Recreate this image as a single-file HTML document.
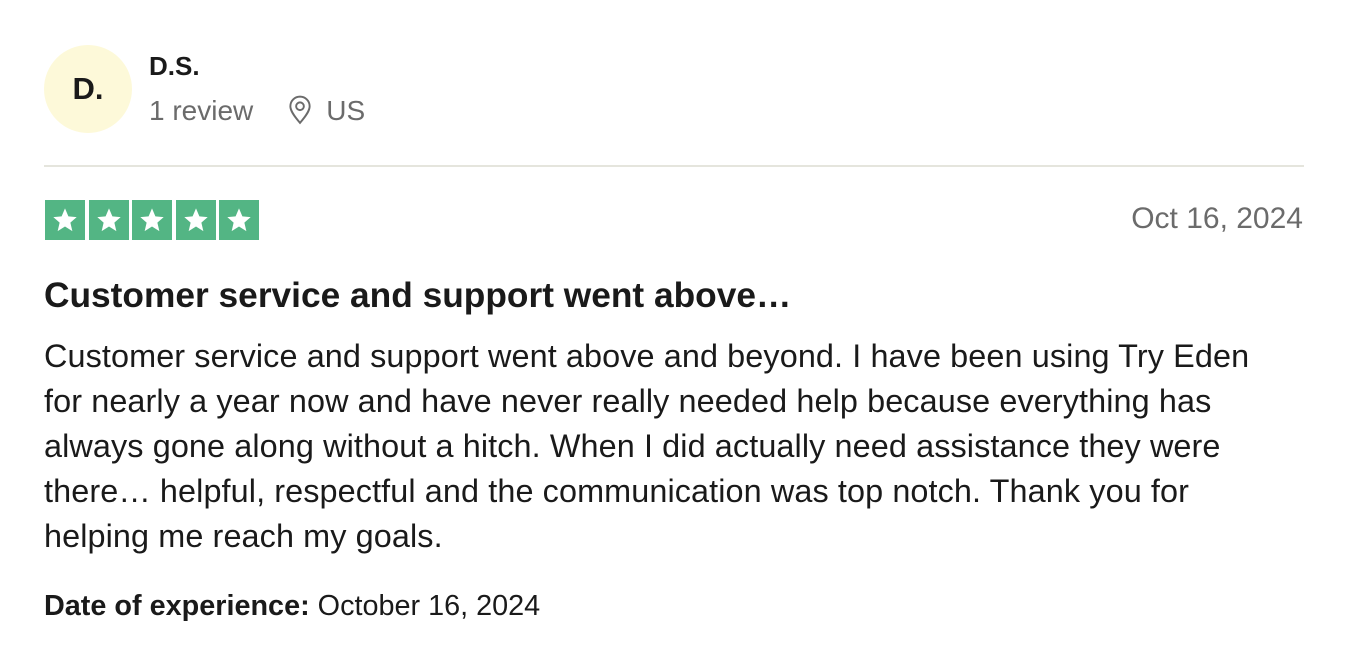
<!DOCTYPE html>
<html><head><meta charset="utf-8"><style>
body{margin:0;width:1348px;height:656px;background:#fff;font-family:"Liberation Sans",Arial,sans-serif;color:#1a1a1a;position:relative;overflow:hidden}
div{line-height:1.15}
.av{position:absolute;left:44px;top:45px;width:88px;height:88px;border-radius:50%;background:#fdf9d9;font-weight:bold;font-size:31px;line-height:88px;text-align:center}
.name{position:absolute;left:149px;top:52px;font-weight:bold;font-size:26px}
.meta{position:absolute;left:149px;top:95px;font-size:28px;color:#6b6b6b;white-space:nowrap}
.hr{position:absolute;left:44px;top:165px;width:1260px;height:2px;background:#e5e5dd}
.stars{position:absolute;left:45px;top:200px;display:flex;gap:3.5px}
.stars div{width:40px;height:40px;background:#53b584;display:flex;align-items:center;justify-content:center}
.date{position:absolute;right:45px;top:202px;font-size:30px;color:#6b6b6b}
.title{position:absolute;left:44px;top:276px;font-weight:bold;font-size:35.3px;white-space:nowrap}
.body{position:absolute;left:44px;top:334px;width:1290px;font-size:32.4px;letter-spacing:0.1px;line-height:45px;white-space:nowrap}
.doe{position:absolute;left:44px;top:590px;font-size:28.8px;white-space:nowrap}
</style></head><body>
<div class="av">D.</div>
<div class="name">D.S.</div>
<div class="meta">1 review<span style="display:inline-block;width:34px"></span><svg width="26" height="30" viewBox="0 0 24 28" style="vertical-align:-5px"><path d="M12 26C6 19 3 14.5 3 10.5a9 9 0 0 1 18 0C21 14.5 18 19 12 26z" fill="none" stroke="#6b6b6b" stroke-width="1.8"/><circle cx="12" cy="10.5" r="3.6" fill="none" stroke="#6b6b6b" stroke-width="1.8"/></svg><span style="display:inline-block;width:13px"></span>US</div>
<div class="hr"></div>
<div class="stars">
<div><svg width="28" height="28" viewBox="0 0 24 24"><path d="M12 2l2.9 6.9 7.1.6-5.4 4.7 1.7 7.3L12 17.6 5.7 21.5l1.7-7.3L2 9.5l7.1-.6z" fill="#fff"/></svg></div>
<div><svg width="28" height="28" viewBox="0 0 24 24"><path d="M12 2l2.9 6.9 7.1.6-5.4 4.7 1.7 7.3L12 17.6 5.7 21.5l1.7-7.3L2 9.5l7.1-.6z" fill="#fff"/></svg></div>
<div><svg width="28" height="28" viewBox="0 0 24 24"><path d="M12 2l2.9 6.9 7.1.6-5.4 4.7 1.7 7.3L12 17.6 5.7 21.5l1.7-7.3L2 9.5l7.1-.6z" fill="#fff"/></svg></div>
<div><svg width="28" height="28" viewBox="0 0 24 24"><path d="M12 2l2.9 6.9 7.1.6-5.4 4.7 1.7 7.3L12 17.6 5.7 21.5l1.7-7.3L2 9.5l7.1-.6z" fill="#fff"/></svg></div>
<div><svg width="28" height="28" viewBox="0 0 24 24"><path d="M12 2l2.9 6.9 7.1.6-5.4 4.7 1.7 7.3L12 17.6 5.7 21.5l1.7-7.3L2 9.5l7.1-.6z" fill="#fff"/></svg></div>
</div>
<div class="date">Oct 16, 2024</div>
<div class="title">Customer service and support went above…</div>
<div class="body">Customer service and support went above and beyond. I have been using Try Eden<br>for nearly a year now and have never really needed help because everything has<br>always gone along without a hitch. When I did actually need assistance they were<br>there… helpful, respectful and the communication was top notch. Thank you for<br>helping me reach my goals.</div>
<div class="doe"><b>Date of experience:</b> October 16, 2024</div>
</body></html>
